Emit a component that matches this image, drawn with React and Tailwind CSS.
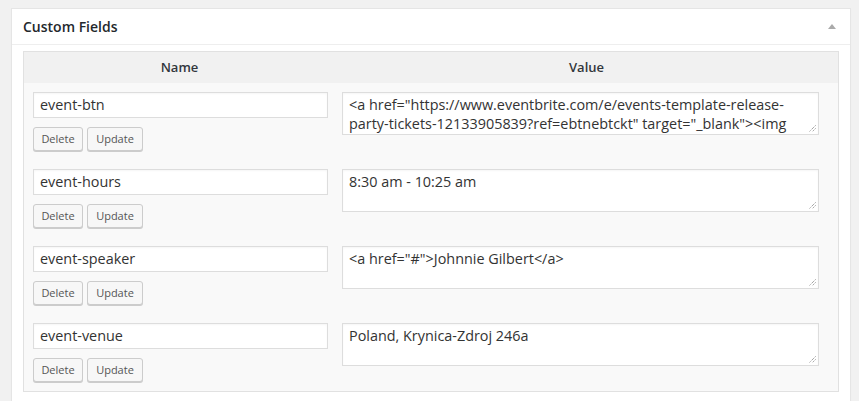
const fields = [
  {
    name: 'event-btn',
    value:
      '<a href="https://www.eventbrite.com/e/events-template-release-party-tickets-12133905839?ref=ebtnebtckt" target="_blank"><img',
  },
  { name: 'event-hours', value: '8:30 am - 10:25 am' },
  { name: 'event-speaker', value: '<a href="#">Johnnie Gilbert</a>' },
  { name: 'event-venue', value: 'Poland, Krynica-Zdroj 246a' },
];

function Grip() {
  return (
    <svg className="absolute right-[2px] bottom-[2px]" width="7" height="7" viewBox="0 0 7 7">
      <path d="M6.5 0.5 L0.5 6.5 M6.5 3.5 L3.5 6.5" stroke="#777" strokeWidth="1" strokeDasharray="1 1" />
    </svg>
  );
}

function Button({ children, w }) {
  return (
    <button
      className={`h-[24px] ${w} rounded-[3px] border border-[#cccccc] bg-[#f7f7f7] text-[11px] text-[#555] shadow-[0_1px_0_#ccc]`}
    >
      {children}
    </button>
  );
}

function Row({ field }) {
  return (
    <div className="flex py-[9px]">
      <div className="w-[311px] pl-[9px] shrink-0">
        <div className="h-[26px] w-[295px] border border-[#dddddd] bg-white px-[6px] text-[14.4px] leading-[24px] text-[#333] shadow-[inset_0_1px_2px_rgba(0,0,0,0.04)]">
          {field.name}
        </div>
        <div className="mt-[9px] flex gap-[4px]">
          <Button w="w-[50px]">Delete</Button>
          <Button w="w-[56px]">Update</Button>
        </div>
      </div>
      <div className="pl-[7px]">
        <div className="relative h-[43px] w-[477px] border border-[#dddddd] bg-white shadow-[inset_0_1px_2px_rgba(0,0,0,0.04)]">
          <div className="h-[41px] overflow-hidden px-[6px] pt-[2px] text-[14.4px] leading-[19px] text-[#333]">
            <div className="break-words">{field.value}</div>
          </div>
          <Grip />
        </div>
      </div>
    </div>
  );
}

export default function App() {
  return (
    <div className="min-h-screen bg-[#f1f1f1] pt-[8px] pl-[11px] pr-[8px] font-['Open_Sans',sans-serif]">
      <div className="border border-[#e5e5e5] bg-white pb-[12px] shadow-[0_1px_1px_rgba(0,0,0,0.04)]">
        <div className="flex h-[36px] items-center justify-between border-b border-[#eeeeee] pl-[11px] pr-[14px]">
          <h2 className="text-[14px] font-semibold text-[#23282d]">Custom Fields</h2>
          <svg width="8" height="5" viewBox="0 0 8 5">
            <path d="M4 0 L8 5 L0 5 Z" fill="#aaaaaa" />
          </svg>
        </div>
        <div className="px-[11px] pt-[6px]">
          <div className="w-[816px] border border-[#e1e1e1] bg-[#f9f9f9]">
            <div className="flex h-[31px] items-center bg-[#f1f1f1] text-[13px] font-semibold text-[#32373c]">
              <div className="w-[311px] text-center">Name</div>
              <div className="flex-1 text-center">Value</div>
            </div>
            {fields.map((f) => (
              <Row key={f.name} field={f} />
            ))}
          </div>
        </div>
      </div>
    </div>
  );
}
